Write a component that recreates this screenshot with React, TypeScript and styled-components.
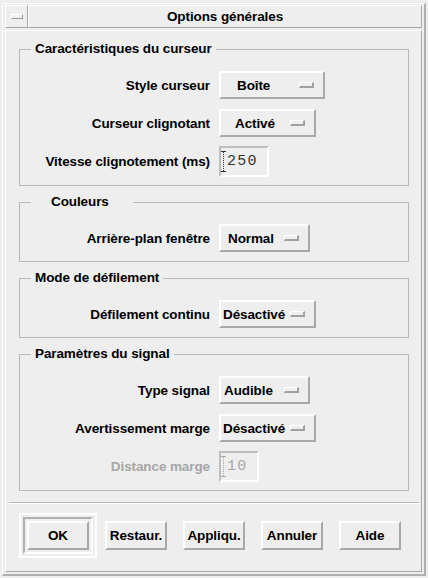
import React from "react";
import styled, { createGlobalStyle } from "styled-components";

const HI = "#ffffff";
const SH = "#a8a8a8";
const BG = "#eeeeee";

const Global = createGlobalStyle`
  html, body { margin: 0; padding: 0; background: ${BG}; }
  body { font-family: "Liberation Sans", Arial, Helvetica, sans-serif; }
  * { box-sizing: border-box; }
`;

const boldText = `
  font-weight: bold;
  font-size: 13.5px;
  letter-spacing: -0.1px;
  color: #000;
  white-space: nowrap;
`;

const Window = styled.div`
  margin: 3px 0 0 2px;
  width: 424px;
  height: 573px;
  border-top: 1px solid ${HI};
  border-left: 1px solid ${HI};
  border-right: 2px solid #b0b0b0;
  border-bottom: 2px solid #b0b0b0;
  padding: 1px 2px 2px 2px;
  display: flex;
  flex-direction: column;
  gap: 2px;
  background: ${BG};
`;

const TitleBar = styled.div`
  display: flex;
  height: 23px;
`;

const Raised = styled.div`
  border-top: 1px solid ${HI};
  border-left: 1px solid ${HI};
  border-right: 1px solid ${SH};
  border-bottom: 1px solid ${SH};
`;

const MenuButton = styled(Raised)`
  width: 23px;
  flex: none;
  display: flex;
  align-items: center;
  justify-content: center;
`;

const MenuGlyph = styled.span`
  flex: none;
  display: block;
  width: 12px;
  height: 5px;
  border-top: 1px solid ${HI};
  border-left: 1px solid ${HI};
  border-right: 1px solid #9a9a9a;
  border-bottom: 1px solid #9a9a9a;
`;

const TitleArea = styled(Raised)`
  flex: 1;
  display: flex;
  align-items: center;
  justify-content: center;
  ${boldText}
`;

const Body = styled.div`
  flex: 1;
  border-top: 1px solid ${HI};
  border-left: 1px solid ${HI};
  border-right: 1px solid ${SH};
  border-bottom: 1px solid ${SH};
  padding: 10px 12px 13px 13px;
  display: flex;
  flex-direction: column;
`;

const Groups = styled.div`
  display: flex;
  flex-direction: column;
  gap: 8px;
`;

const Group = styled.fieldset`
  margin: 0;
  padding: 0 0 8px 0;
  border: 1px solid #b8b8b8;
  min-width: 0;
`;

const Legend = styled.legend<{ $padL?: number; $padR?: number }>`
  margin-left: 11px;
  padding: 0 ${(p) => p.$padR ?? 4}px 0 ${(p) => p.$padL ?? 4}px;
  line-height: 16px;
  ${boldText}
`;

const Rows = styled.div`
  display: grid;
  grid-template-columns: 190px 1fr;
  column-gap: 9px;
  row-gap: 8px;
  align-items: center;
  padding-top: 13px;
`;

const Label = styled.span<{ $disabled?: boolean }>`
  text-align: right;
  ${boldText}
  color: ${(p) => (p.$disabled ? "#a6a6a6" : "#000")};
`;

const OptionButton = styled.div<{ $w: number; $pad: number }>`
  width: ${(p) => p.$w}px;
  height: 28px;
  margin: 1px 0;
  border-top: 2px solid ${HI};
  border-left: 2px solid ${HI};
  border-right: 2px solid ${SH};
  border-bottom: 2px solid ${SH};
  display: flex;
  align-items: center;
  padding-left: ${(p) => p.$pad}px;
  ${boldText}
`;

const Indicator = styled.span`
  flex: none;
  margin-left: auto;
  margin-right: 9px;
  width: 15px;
  height: 6px;
  border-top: 1px solid ${HI};
  border-left: 1px solid ${HI};
  border-right: 2px solid #a0a0a0;
  border-bottom: 2px solid #a0a0a0;
`;

const TextField = styled.div<{ $w: number; $disabled?: boolean }>`
  width: ${(p) => p.$w}px;
  height: 31px;
  border-top: 2px solid #bdbdbd;
  border-left: 2px solid #bdbdbd;
  border-right: 2px solid ${HI};
  border-bottom: 2px solid ${HI};
  display: flex;
  align-items: center;
  color: ${(p) => (p.$disabled ? "#a8a8a8" : "#333")};
`;

const FieldValue = styled.span`
  font-family: "Liberation Mono", "DejaVu Sans Mono", monospace;
  font-size: 15px;
  letter-spacing: 1.2px;
  line-height: 1;
`;

const Separator = styled.div`
  margin: 11px -10px 0 -10px;
  height: 2px;
  border-top: 1px solid #b8b8b8;
  border-bottom: 1px solid ${HI};
`;

const ButtonRow = styled.div`
  margin-top: 9px;
  display: flex;
  align-items: center;
  height: 45px;
`;

const Slot = styled.div`
  width: 78px;
  display: flex;
  justify-content: center;
  align-items: center;
`;

const DefaultRing = styled.div`
  width: 78px;
  height: 45px;
  border: 2px solid ${HI};
  padding: 2px;
  display: flex;
`;

const RingInner = styled.div`
  flex: 1;
  border-top: 2px solid #b0b0b0;
  border-left: 2px solid #b0b0b0;
  border-right: 2px solid ${HI};
  border-bottom: 2px solid ${HI};
  padding: 2px;
  display: flex;
`;

const PushButton = styled.div`
  width: 62px;
  height: 29px;
  border-top: 2px solid ${HI};
  border-left: 2px solid ${HI};
  border-right: 2px solid ${SH};
  border-bottom: 2px solid ${SH};
  display: flex;
  align-items: center;
  justify-content: center;
  ${boldText}
`;

const Caret: React.FC = () => (
  <svg width="5" height="21" viewBox="0 0 5 21" style={{ flex: "none", marginRight: 1 }}>
    <path d="M0 0.5H5M0 20.5H5" stroke="currentColor" strokeWidth="1" />
    <path d="M2.5 1V20" stroke="currentColor" strokeWidth="1" strokeDasharray="1 1" />
  </svg>
);

type Opt = { label: string; value: string; w: number; pad: number };

const OptionRow: React.FC<Opt> = ({ label, value, w, pad }) => (
  <>
    <Label>{label}</Label>
    <div>
      <OptionButton $w={w} $pad={pad}>
        {value}
        <Indicator />
      </OptionButton>
    </div>
  </>
);

const FieldRow: React.FC<{ label: string; value: string; w: number; disabled?: boolean }> = ({
  label,
  value,
  w,
  disabled,
}) => (
  <>
    <Label $disabled={disabled}>{label}</Label>
    <div>
      <TextField $w={w} $disabled={disabled}>
        <Caret />
        <FieldValue>{value}</FieldValue>
      </TextField>
    </div>
  </>
);

export default function App() {
  return (
    <>
      <Global />
      <Window>
        <TitleBar>
          <MenuButton>
            <MenuGlyph />
          </MenuButton>
          <TitleArea>Options générales</TitleArea>
        </TitleBar>
        <Body>
          <Groups>
            <Group>
              <Legend>Caractéristiques du curseur</Legend>
              <Rows>
                <OptionRow label="Style curseur" value="Boîte" w={106} pad={16} />
                <OptionRow label="Curseur clignotant" value="Activé" w={97} pad={14} />
                <FieldRow label="Vitesse clignotement (ms)" value="250" w={50} />
              </Rows>
            </Group>
            <Group>
              <Legend $padL={20} $padR={24}>
                Couleurs
              </Legend>
              <Rows>
                <OptionRow label="Arrière-plan fenêtre" value="Normal" w={91} pad={7} />
              </Rows>
            </Group>
            <Group>
              <Legend>Mode de défilement</Legend>
              <Rows>
                <OptionRow label="Défilement continu" value="Désactivé" w={97} pad={2} />
              </Rows>
            </Group>
            <Group>
              <Legend>Paramètres du signal</Legend>
              <Rows>
                <OptionRow label="Type signal" value="Audible" w={91} pad={3} />
                <OptionRow label="Avertissement marge" value="Désactivé" w={97} pad={2} />
                <FieldRow label="Distance marge" value="10" w={40} disabled />
              </Rows>
            </Group>
          </Groups>
          <Separator />
          <ButtonRow>
            <Slot>
              <DefaultRing>
                <RingInner>
                  <PushButton>OK</PushButton>
                </RingInner>
              </DefaultRing>
            </Slot>
            <Slot>
              <PushButton>Restaur.</PushButton>
            </Slot>
            <Slot>
              <PushButton>Appliqu.</PushButton>
            </Slot>
            <Slot>
              <PushButton>Annuler</PushButton>
            </Slot>
            <Slot>
              <PushButton>Aide</PushButton>
            </Slot>
          </ButtonRow>
        </Body>
      </Window>
    </>
  );
}
